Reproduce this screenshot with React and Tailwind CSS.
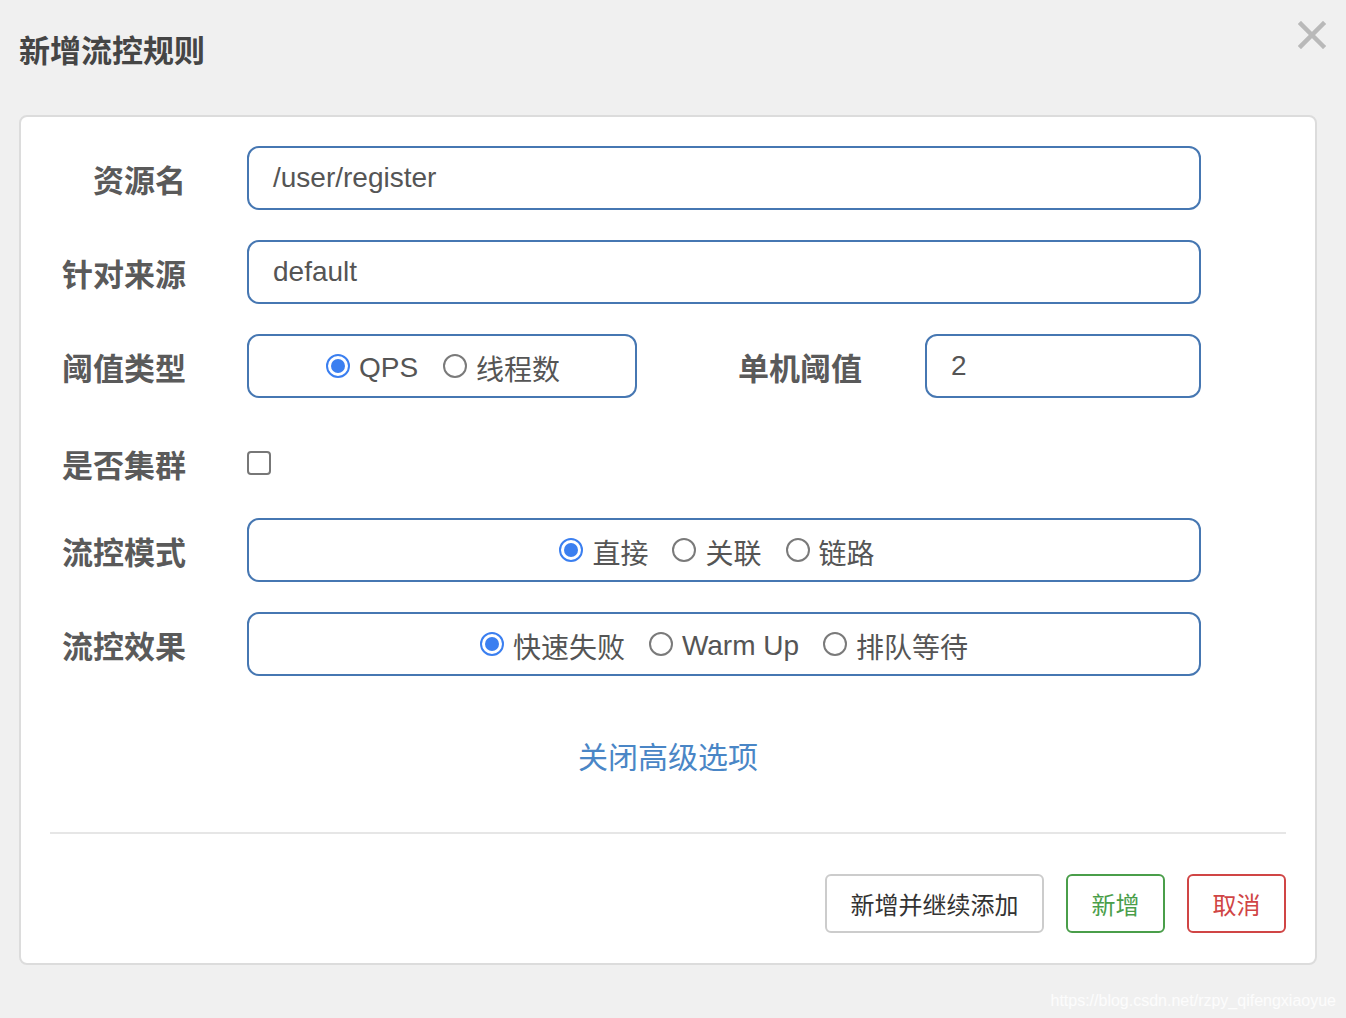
import React from "react";

const cjk = { fontFamily: '"Noto Sans CJK SC", "Noto Sans", sans-serif' };
const latin = { fontFamily: '"Liberation Sans", "Noto Sans CJK SC", sans-serif' };

const Radio = ({ checked }) =>
  checked ? (
    <span className="w-[24px] h-[24px] rounded-full border-[2px] border-[#3b7ff0] bg-white flex items-center justify-center shrink-0">
      <span className="w-[14px] h-[14px] rounded-full bg-[#3b7ff0]" />
    </span>
  ) : (
    <span className="w-[24px] h-[24px] rounded-full border-[2px] border-[#7a7a7a] bg-white shrink-0" />
  );

const RadioItem = ({ checked, label, font = cjk }) => (
  <span className="flex items-center gap-[9px]">
    <Radio checked={checked} />
    <span className="text-[28px] text-[#555] leading-none mt-[4px] whitespace-nowrap" style={font}>
      {label}
    </span>
  </span>
);

const Label = ({ children, className = "w-[136px]" }) => (
  <div
    className={`${className} shrink-0 text-right text-[31px] font-bold text-[#5a5a5a] leading-none whitespace-nowrap`}
    style={cjk}
  >
    {children}
  </div>
);

const boxCls =
  "h-[64px] border-[2px] border-[#4677b2] rounded-[12px] bg-white flex items-center";

const TextBox = ({ value, className = "w-[954px]" }) => (
  <div className={`${boxCls} ${className} pl-[24px]`}>
    <span className="text-[28px] text-[#555] leading-none" style={latin}>
      {value}
    </span>
  </div>
);

const Row = ({ children, className = "h-[64px]" }) => (
  <div className={`flex items-center ${className}`}>{children}</div>
);

export default function App() {
  return (
    <div className="w-[1346px] h-[1018px] bg-[#f0f0f0] relative overflow-hidden" style={cjk}>
      <div className="h-[96px] flex items-center justify-between pl-[19px] pr-[20px]">
        <h1 className="text-[31px] font-bold text-[#454545] leading-none">新增流控规则</h1>
        <svg width="28" height="28" viewBox="0 0 28 28" className="-mt-[26px]">
          <path d="M3 3 L25 25 M25 3 L3 25" stroke="#b9b9b9" strokeWidth="4.5" strokeLinecap="square" />
        </svg>
      </div>

      <div className="mx-[19px] mt-[19px] w-[1298px] h-[850px] bg-white border-[2px] border-[#dcdcdc] rounded-[8px] pt-[29px] pl-[29px]">
        <div className="flex flex-col gap-[30px]">
          <Row>
            <Label>资源名</Label>
            <div className="w-[61px]" />
            <TextBox value="/user/register" />
          </Row>
          <Row>
            <Label>针对来源</Label>
            <div className="w-[61px]" />
            <TextBox value="default" />
          </Row>
          <Row>
            <Label>阈值类型</Label>
            <div className="w-[61px]" />
            <div className={`${boxCls} w-[390px] justify-center gap-[25px] pl-[2px]`}>
              <RadioItem checked label="QPS" font={latin} />
              <RadioItem label="线程数" />
            </div>
            <Label className="w-[128px] ml-[97px]">单机阈值</Label>
            <div className="w-[63px]" />
            <TextBox value="2" className="w-[276px]" />
          </Row>
          <Row className="h-[60px] pt-[10px]">
            <Label>是否集群</Label>
            <div className="w-[61px]" />
            <span className="w-[24px] h-[24px] border-[2px] border-[#777] rounded-[4px] bg-white" />
          </Row>
          <Row>
            <Label>流控模式</Label>
            <div className="w-[61px]" />
            <div className={`${boxCls} w-[954px] justify-center gap-[24px] pr-[14px]`}>
              <RadioItem checked label="直接" />
              <RadioItem label="关联" />
              <RadioItem label="链路" />
            </div>
          </Row>
          <Row>
            <Label>流控效果</Label>
            <div className="w-[61px]" />
            <div className={`${boxCls} w-[954px] justify-center gap-[24px]`}>
              <RadioItem checked label="快速失败" />
              <RadioItem label="Warm Up" font={latin} />
              <RadioItem label="排队等待" />
            </div>
          </Row>
        </div>

        <div className="w-[1236px] flex justify-center mt-[64px]">
          <span className="text-[30px] text-[#4a86c6] leading-none">关闭高级选项</span>
        </div>

        <div className="w-[1236px] h-[2px] bg-[#e6e6e6] mt-[62px]" />

        <div className="w-[1236px] flex justify-end gap-[22px] mt-[40px]">
          <button className="w-[219px] h-[59px] border-[2px] border-[#cccccc] rounded-[6px] bg-white text-[24px] text-[#333]">
            新增并继续添加
          </button>
          <button className="w-[99px] h-[59px] border-[2px] border-[#4a9e4a] rounded-[6px] bg-white text-[24px] text-[#4a9e4a]">
            新增
          </button>
          <button className="w-[99px] h-[59px] border-[2px] border-[#d04545] rounded-[6px] bg-white text-[24px] text-[#d04545]">
            取消
          </button>
        </div>
      </div>

      <div
        className="absolute right-[10px] bottom-[9px] text-[16px] text-white/80 leading-none"
        style={latin}
      >
        https://blog.csdn.net/rzpy_qifengxiaoyue
      </div>
    </div>
  );
}
